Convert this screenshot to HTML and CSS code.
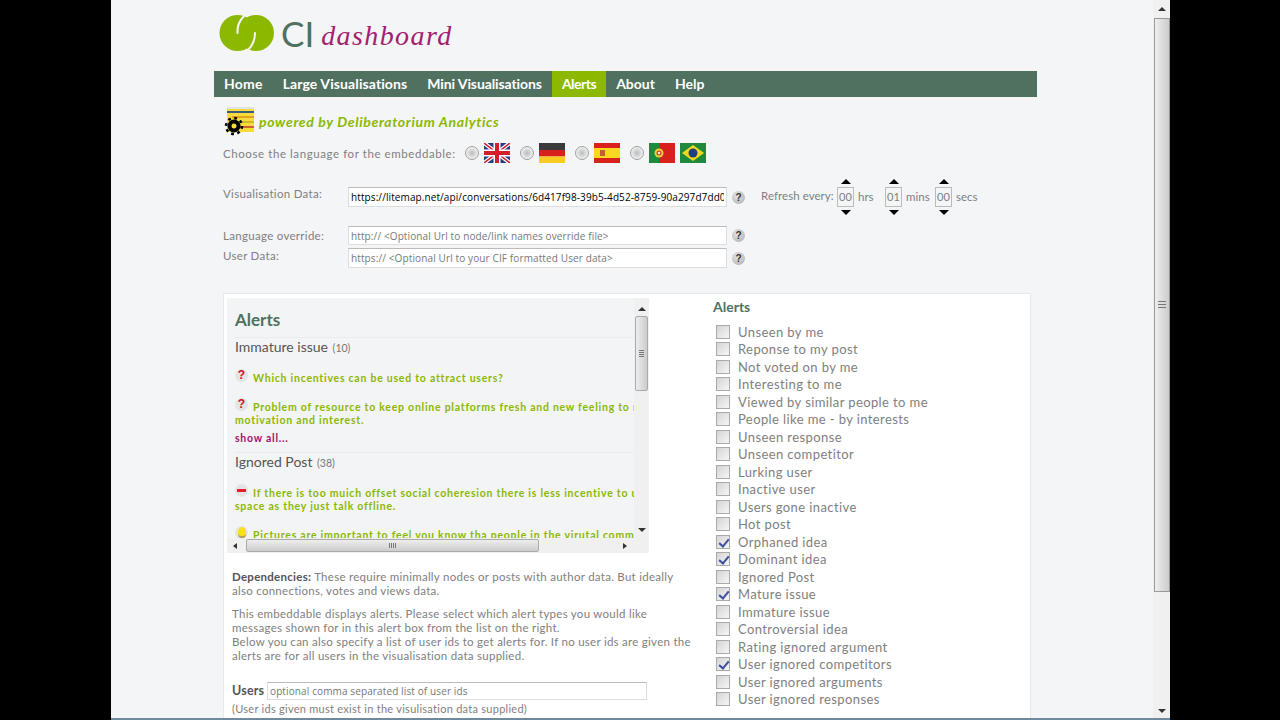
FILE: index.html
```html
<!DOCTYPE html>
<html lang="en">

<head>
  <meta charset="UTF-8">
  <title>CI dashboard</title>
  <link rel="stylesheet" href="styles.css">
</head>

<body>
  <div class="window">
    <div class="viewport">
      <div class="page">
        <div class="content">

          <div class="logo">
            <svg class="logo-mark" width="56" height="38" viewBox="0 0 56 38">
              <circle cx="18.500" cy="19" r="18" fill="#8cb800"/>
              <circle cx="37" cy="19" r="18" fill="#8cb800"/>
              <path d="M25 2C20 7 18 13 18.500 19" fill="none" stroke="#f4f5f7" stroke-width="2" stroke-linecap="round"/>
              <path d="M36 19C36 26 33 32 29 36" fill="none" stroke="#f4f5f7" stroke-width="2" stroke-linecap="round"/>
            </svg>
            <span class="logo-ci">CI</span>
            <span class="logo-dash">dashboard</span>
          </div>

          <ul class="nav">
            <li>Home</li>
            <li>Large Visualisations</li>
            <li>Mini Visualisations</li>
            <li class="active">Alerts</li>
            <li>About</li>
            <li>Help</li>
          </ul>

          <div class="powered">
            <svg width="32" height="30" viewBox="0 0 32 30">
              <rect x="3" y="1" width="27" height="25" fill="#f7dc3c"/>
              <rect x="3" y="1" width="27" height="2" fill="#dfe3e6"/>
              <rect x="3" y="5" width="27" height="2" fill="#3a5a80"/>
              <rect x="8" y="10" width="22" height="2" fill="#e8a020"/>
              <rect x="12" y="15" width="18" height="2" fill="#c9c020"/>
              <rect x="16" y="20" width="14" height="2" fill="#d06030"/>
              <circle cx="10" cy="20" r="6.500" fill="#000"/>
              <circle cx="10" cy="20" r="8" fill="none" stroke="#000" stroke-width="2.500" stroke-dasharray="2.800 3.480"/>
              <circle cx="10" cy="20" r="2.500" fill="#f7dc3c"/>
            </svg>
            <span>powered by Deliberatorium Analytics</span>
          </div>

          <div class="lang-row">
            <span class="lang-label">Choose the language for the embeddable:</span>
            <input type="radio" class="radio" name="lang">
            <svg class="flag" width="26" height="20" viewBox="0 0 26 20">
              <rect width="26" height="20" fill="#2b3a80"/>
              <path d="M0 0L26 20M26 0L0 20" stroke="#fff" stroke-width="4"/>
              <path d="M0 0L26 20M26 0L0 20" stroke="#d02030" stroke-width="1.500"/>
              <path d="M13 0V20M0 10H26" stroke="#fff" stroke-width="7"/>
              <path d="M13 0V20M0 10H26" stroke="#d02030" stroke-width="4"/>
            </svg>
            <input type="radio" class="radio" name="lang">
            <svg class="flag" width="26" height="20" viewBox="0 0 26 20">
              <rect width="26" height="7" fill="#3a3a3a"/>
              <rect y="7" width="26" height="6.500" fill="#d8201c"/>
              <rect y="13.500" width="26" height="6.500" fill="#f8cc20"/>
            </svg>
            <input type="radio" class="radio" name="lang">
            <svg class="flag" width="26" height="20" viewBox="0 0 26 20">
              <rect width="26" height="20" fill="#d8201c"/>
              <rect y="5" width="26" height="10" fill="#f8d820"/>
              <rect x="6" y="7" width="5" height="6" fill="#c06030"/>
            </svg>
            <input type="radio" class="radio" name="lang">
            <svg class="flag flag-pt" width="26" height="20" viewBox="0 0 26 20">
              <rect width="26" height="20" fill="#d8201c"/>
              <rect width="10" height="20" fill="#1f8a3c"/>
              <circle cx="10" cy="10" r="4.500" fill="#e8d040"/>
              <circle cx="10" cy="10" r="2.500" fill="#d8401c"/>
              <circle cx="10" cy="10" r="1.200" fill="#f4f4f4"/>
            </svg>
            <svg class="flag flag-br" width="26" height="20" viewBox="0 0 26 20">
              <rect width="26" height="20" fill="#1f8a3c"/>
              <path d="M13 2L24 10L13 18L2 10Z" fill="#f0d820"/>
              <circle cx="13" cy="10" r="4.500" fill="#1f3f80"/>
            </svg>
          </div>

          <div class="form-row first">
            <label class="form-label">Visualisation Data:</label>
            <input class="text-input filled" type="text" value="https://litemap.net/api/conversations/6d417f98-39b5-4d52-8759-90a297d7dd0">
            <span class="help">?</span>
            <span class="refresh">Refresh every:</span>
            <span class="spin"><i class="up"></i><b>00</b><i class="down"></i></span>
            <span class="unit unit-hrs">hrs</span>
            <span class="spin"><i class="up"></i><b>01</b><i class="down"></i></span>
            <span class="unit unit-mins">mins</span>
            <span class="spin"><i class="up"></i><b>00</b><i class="down"></i></span>
            <span class="unit">secs</span>
          </div>
          <div class="form-row second">
            <label class="form-label">Language override:</label>
            <input class="text-input" type="text" placeholder="http:// <Optional Url to node/link names override file>">
            <span class="help">?</span>
          </div>
          <div class="form-row third">
            <label class="form-label">User Data:</label>
            <input class="text-input" type="text" placeholder="https:// <Optional Url to your CIF formatted User data>">
            <span class="help">?</span>
          </div>

          <div class="panel">
            <div class="panel-left">
              <div class="embed">
                <div class="embed-body">
                  <div class="embed-scroll">
                    <h2>Alerts</h2>
                    <h3>Immature issue <small>(10)</small></h3>
                    <p class="alert-item item-a"><span class="ico ico-q">?</span>Which incentives can be used to attract users?</p>
                    <p class="alert-item item-b"><span class="ico ico-q">?</span>Problem of resource to keep online platforms fresh and new feeling to maintain<br>motivation and interest.</p>
                    <a class="show-all">show all...</a>
                    <h3 class="next">Ignored Post <small>(38)</small></h3>
                    <p class="alert-item item-c"><span class="ico ico-minus"></span>If there is too muich offset social coheresion there is less incentive to use the<br>space as they just talk offline.</p>
                    <p class="alert-item item-d"><span class="ico ico-bulb"></span>Pictures are important to feel you know tha people in the virutal community</p>
                  </div>
                  <div class="vbar">
                    <i class="tri tri-up"></i>
                    <div class="vthumb"><span></span></div>
                    <i class="tri tri-down"></i>
                  </div>
                </div>
                <div class="hbar">
                  <i class="tri tri-left"></i>
                  <div class="hthumb"><span></span></div>
                  <i class="tri tri-right"></i>
                </div>
              </div>

              <div class="notes">
                <p class="dep"><b>Dependencies:</b> These require minimally nodes or posts with author data. But ideally also connections, votes and views data.</p>
                <p>This embeddable displays alerts. Please select which alert types you would like messages shown for in this alert box from the list on the right.<br>Below you can also specify a list of user ids to get alerts for. If no user ids are given the alerts are for all users in the visualisation data supplied.</p>
                <div class="users-row">
                  <b>Users</b>
                  <input class="text-input users-input" type="text" placeholder="optional comma separated list of user ids">
                </div>
                <p class="hint">(User ids given must exist in the visulisation data supplied)</p>
              </div>
            </div>

            <div class="panel-right">
              <h4>Alerts</h4>
              <label class="check"><input type="checkbox">Unseen by me</label>
              <label class="check"><input type="checkbox">Reponse to my post</label>
              <label class="check"><input type="checkbox">Not voted on by me</label>
              <label class="check"><input type="checkbox">Interesting to me</label>
              <label class="check"><input type="checkbox">Viewed by similar people to me</label>
              <label class="check"><input type="checkbox">People like me - by interests</label>
              <label class="check"><input type="checkbox">Unseen response</label>
              <label class="check"><input type="checkbox">Unseen competitor</label>
              <label class="check"><input type="checkbox">Lurking user</label>
              <label class="check"><input type="checkbox">Inactive user</label>
              <label class="check"><input type="checkbox">Users gone inactive</label>
              <label class="check"><input type="checkbox">Hot post</label>
              <label class="check"><input type="checkbox" checked>Orphaned idea</label>
              <label class="check"><input type="checkbox" checked>Dominant idea</label>
              <label class="check"><input type="checkbox">Ignored Post</label>
              <label class="check"><input type="checkbox" checked>Mature issue</label>
              <label class="check"><input type="checkbox">Immature issue</label>
              <label class="check"><input type="checkbox">Controversial idea</label>
              <label class="check"><input type="checkbox">Rating ignored argument</label>
              <label class="check"><input type="checkbox" checked>User ignored competitors</label>
              <label class="check"><input type="checkbox">User ignored arguments</label>
              <label class="check"><input type="checkbox">User ignored responses</label>
            </div>
          </div>

        </div>
      </div>
      <div class="page-bar">
        <i class="tri tri-up"></i>
        <div class="page-thumb"><span></span></div>
        <i class="tri tri-down"></i>
      </div>
    </div>
    <div class="taskbar"></div>
  </div>
</body>

</html>
```

FILE: styles.css
```css
* {
  padding: 0;
  margin: 0;
  box-sizing: border-box;
}

html,
body {
  height: 720px;
  overflow: hidden;
  background-color: #000;
}

body {
  font-family: "Lato", "Liberation Sans", sans-serif;
  color: #808080;
}

ul {
  list-style: none;
}

.window {
  width: 1059px;
  height: 720px;
  margin-left: 111px;
  display: flex;
  flex-direction: column;
}

.viewport {
  height: 718px;
  display: flex;
}

.taskbar {
  height: 2px;
  background-color: #6f8a9c;
}

.page {
  flex: 1;
  background-color: #f4f5f7;
  overflow: hidden;
}

.content {
  width: 823px;
  margin-left: 103px;
}

/* logo */
.logo {
  height: 71px;
  display: flex;
  padding: 14px 0 0 5px;
}

.logo-mark {
  flex: none;
}

.logo-ci {
  font-size: 35px;
  line-height: 38px;
  color: #4f7160;
  margin-left: 6px;
}

.logo-dash {
  font-family: "Liberation Serif", serif;
  font-style: italic;
  font-size: 28px;
  line-height: 44px;
  letter-spacing: 1.4px;
  color: #a3206f;
  margin-left: 7px;
}

/* nav */
.nav {
  display: flex;
  height: 26px;
  background-color: #507060;
}

.nav li {
  padding: 0 10px;
  font-size: 14px;
  font-weight: 700;
  line-height: 26px;
  color: #fff;
}

.nav li:nth-child(1) {
  letter-spacing: .2px;
}

.nav li:nth-child(2) {
  letter-spacing: .1px;
}

.nav li:nth-child(3) {
  letter-spacing: -.1px;
}

.nav .active {
  background-color: #8cb800;
  letter-spacing: -.5px;
}

.powered {
  display: flex;
  align-items: center;
  height: 30px;
  margin-top: 9px;
  padding-left: 10px;
  font-size: 14px;
  font-style: italic;
  font-weight: 700;
  color: #8cb800;
}

.powered span {
  margin-left: 3px;
  letter-spacing: .65px;
}

.lang-row {
  display: flex;
  align-items: center;
  height: 22px;
  margin-top: 6px;
  padding-left: 9px;
  font-size: 11.500px;
  letter-spacing: .58px;
}

.lang-label {
  width: 242px;
  white-space: nowrap;
}

.radio {
  appearance: none;
  width: 14px;
  height: 14px;
  border: 1px solid #a0a0a0;
  border-radius: 50%;
  background: radial-gradient(circle, #bbb 0, #ddd 45%, #f4f4f4 75%);
  margin-right: 5px;
}

.flag {
  margin-right: 10px;
}

.flag-pt {
  margin-right: 5px;
}

.flag-br {
  margin-right: 0;
}

/* form */
.form-row {
  display: flex;
  align-items: center;
  height: 20px;
  padding-left: 9px;
  font-size: 11.500px;
  letter-spacing: .3px;
}

.first {
  margin-top: 23px;
}

.second {
  margin-top: 19px;
  height: 19px;
}

.third {
  margin-top: 3px;
}

.form-label {
  width: 125px;
  flex: none;
  white-space: nowrap;
  margin-top: -7px;
}

.second .form-label {
  margin-top: 0;
}

.third .form-label {
  margin-top: -6px;
}

.text-input {
  width: 379px;
  height: 100%;
  flex: none;
  border: 1px solid #ddd;
  border-top-color: #bbb;
  background-color: #fff;
  padding: 0 2px;
  font-family: "Open Sans", "Liberation Sans", sans-serif;
  font-size: 10px;
  letter-spacing: .12px;
  color: #000;
  outline: none;
}

.filled {
  letter-spacing: .1px;
}

.text-input::placeholder {
  color: #777;
  opacity: 1;
}

.help {
  width: 13px;
  height: 13px;
  flex: none;
  margin-left: 5px;
  border-radius: 50%;
  background: radial-gradient(circle at 40% 35%, #e6e6e6, #aaa);
  text-align: center;
  font-family: "Liberation Sans", sans-serif;
  font-size: 10px;
  font-weight: 700;
  line-height: 13px;
  color: #333;
  letter-spacing: 0;
}

.refresh {
  margin: -3px 0 0 16px;
  width: 76px;
  white-space: nowrap;
  letter-spacing: .05px;
}

.spin {
  position: relative;
  width: 17px;
  height: 20px;
  flex: none;
  border: 1px solid #bbb;
  text-align: center;
}

.spin b {
  font-weight: 400;
  font-size: 11px;
  line-height: 18px;
  letter-spacing: 0;
}

.spin i {
  position: absolute;
  left: 3px;
  border-left: 5px solid transparent;
  border-right: 5px solid transparent;
}

.spin .up {
  top: -9px;
  border-bottom: 5px solid #000;
}

.spin .down {
  bottom: -9px;
  border-top: 5px solid #000;
}

.unit {
  margin: -2px 0 0 4px;
  letter-spacing: 0;
}

.unit-hrs {
  width: 27px;
}

.unit-mins {
  width: 29px;
}

/* panel */
.panel {
  display: flex;
  width: 808px;
  height: 500px;
  margin: 25px 0 0 9px;
  padding: 4px 0 0 3px;
  background-color: #fff;
  border: 1px solid #e8e8e8;
}

.panel-left {
  width: 486px;
  flex: none;
}

.embed {
  width: 422px;
  height: 255px;
  background-color: #f3f4f6;
  display: flex;
  flex-direction: column;
}

.embed-body {
  height: 240px;
  display: flex;
}

.embed-scroll {
  flex: 1;
  overflow: hidden;
  padding: 12px 0 0 8px;
  white-space: nowrap;
}

.embed-scroll h2 {
  font-size: 17px;
  line-height: 20px;
  color: #4f7160;
  padding-bottom: 7px;
  border-bottom: 1px solid #ececec;
}

.embed-scroll h3 {
  font-size: 14px;
  font-weight: 400;
  line-height: 18px;
  color: #555;
}

.embed-scroll small {
  font-size: 10.500px;
  color: #777;
  margin-left: 1px;
}

.embed-scroll .next {
  border-top: 1px solid #ececec;
  margin-top: 7px;
  height: 19px;
}

.alert-item {
  position: relative;
  font-size: 10.500px;
  font-weight: 700;
  line-height: 13px;
  letter-spacing: .75px;
  color: #8cb800;
  text-indent: 18px;
}

.item-a {
  margin-top: 15px;
}

.item-b {
  margin-top: 16px;
}

.item-c {
  margin-top: 16px;
}

.item-d {
  margin-top: 16px;
}

.ico {
  position: absolute;
  left: 0;
  top: -3px;
  width: 13px;
  height: 13px;
  text-indent: 0;
  border-radius: 50%;
  background-color: #e4e4e4;
  text-align: center;
  font-size: 12px;
  line-height: 13px;
  letter-spacing: 0;
}

.ico-q {
  font-family: "Liberation Sans", sans-serif;
  color: #d01020;
}

.ico-minus::after {
  content: "";
  display: block;
  width: 9px;
  height: 3px;
  margin: 5px 2px;
  background-color: #e02030;
}

.ico-bulb::after {
  content: "";
  display: block;
  width: 8px;
  height: 9px;
  margin: 1px auto;
  border-radius: 50% 50% 40% 40%;
  background-color: #f8e020;
  border-bottom: 2px solid #b0a060;
}

.show-all {
  display: block;
  font-size: 10.500px;
  font-weight: 700;
  line-height: 13px;
  letter-spacing: .75px;
  color: #a3106f;
  margin-top: 5px;
}

/* scrollbars */
.tri {
  display: block;
  width: 0;
  height: 0;
  border-style: solid;
  border-color: transparent;
}

.tri-up {
  border-width: 0 4px 4px;
  border-bottom-color: #333;
}

.tri-down {
  border-width: 4px 4px 0;
  border-top-color: #333;
}

.tri-left {
  border-width: 3px 4px 3px 0;
  border-right-color: #333;
}

.tri-right {
  border-width: 3px 0 3px 4px;
  border-left-color: #333;
}

.vbar {
  width: 15px;
  flex: none;
  display: flex;
  flex-direction: column;
  align-items: center;
  background-color: #f0f0f0;
  padding-top: 9px;
}

.vthumb {
  width: 13px;
  height: 75px;
  margin-top: 5px;
  display: flex;
  align-items: center;
  justify-content: center;
  border: 1px solid #aaa;
  border-radius: 2px;
  background: linear-gradient(to right, #eee, #ccc);
}

.vthumb span {
  width: 5px;
  height: 7px;
  background: repeating-linear-gradient(to bottom, #777 0, #777 1px, transparent 1px, transparent 2px);
}

.vbar .tri-down {
  margin-top: auto;
  margin-bottom: 6px;
}

.hbar {
  height: 15px;
  display: flex;
  align-items: center;
  background-color: #f0f0f0;
  padding: 0 22px 0 6px;
}

.hthumb {
  width: 293px;
  height: 13px;
  margin-left: 9px;
  display: flex;
  align-items: center;
  justify-content: center;
  border: 1px solid #aaa;
  border-radius: 2px;
  background: linear-gradient(to bottom, #eee, #ccc);
}

.hthumb span {
  width: 7px;
  height: 5px;
  background: repeating-linear-gradient(to right, #777 0, #777 1px, transparent 1px, transparent 2px);
}

.hbar .tri-right {
  margin-left: auto;
}

.page-bar {
  width: 17px;
  flex: none;
  display: flex;
  flex-direction: column;
  align-items: center;
  background-color: #f0f0f0;
  padding-top: 7px;
}

.page-thumb {
  width: 16px;
  height: 574px;
  margin: 7px 0 0 1px;
  display: flex;
  align-items: center;
  justify-content: center;
  border: 1px solid #999;
  background: linear-gradient(to right, #eee, #ccc);
}

.page-thumb span {
  width: 8px;
  height: 8px;
  background: repeating-linear-gradient(to bottom, #777 0, #777 1px, transparent 1px, transparent 3px);
}

.page-bar .tri-down {
  margin-top: auto;
  margin-bottom: 5px;
}

/* notes */
.notes {
  width: 470px;
  padding: 17px 0 0 5px;
  font-size: 11.500px;
  line-height: 14.300px;
  letter-spacing: .27px;
}

.notes b {
  color: #555;
}

.notes p {
  margin-bottom: 8px;
}

.users-row {
  display: flex;
  align-items: center;
  height: 18px;
  margin-top: 18px;
}

.users-row b {
  font-size: 12.500px;
  width: 35px;
  flex: none;
  letter-spacing: .2px;
}

.users-input {
  width: 380px;
  font-size: 10px;
}

.notes .hint {
  margin-top: 2px;
  font-size: 11px;
  white-space: nowrap;
}

/* checklist */
.panel-right h4 {
  font-size: 14px;
  line-height: 18px;
  color: #4f7160;
  margin-bottom: 7px;
}

.check {
  display: flex;
  align-items: center;
  height: 17.500px;
  font-size: 13px;
  letter-spacing: .4px;
  white-space: nowrap;
}

.check input {
  appearance: none;
  width: 14px;
  height: 14px;
  margin: 0 8px 0 3px;
  flex: none;
  border: 1px solid #aaa;
  background: linear-gradient(135deg, #d4d4d4, #f6f6f6);
  position: relative;
}

.check input:checked::after {
  content: "";
  position: absolute;
  left: 4px;
  top: 1px;
  width: 4px;
  height: 8px;
  border: solid #3f4fa0;
  border-width: 0 2px 2px 0;
  transform: rotate(40deg);
}
```
